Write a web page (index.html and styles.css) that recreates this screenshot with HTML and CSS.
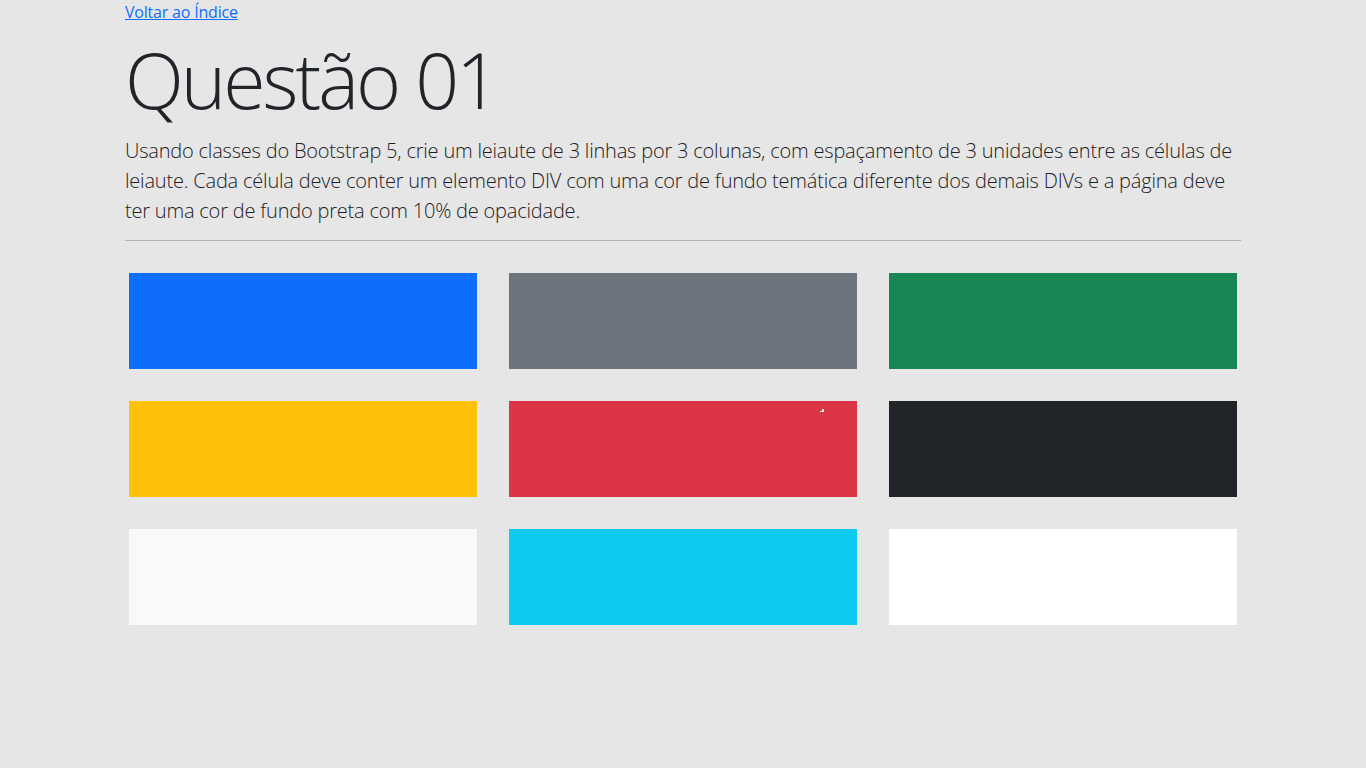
FILE: index.html
```html
<!DOCTYPE html>
<html lang="pt-BR">
<head>
<meta charset="utf-8">
<title>Questão 01</title>
<link rel="stylesheet" href="styles.css">
</head>
<body>
<div class="container">
  <div class="back"><a href="#">Voltar ao Índice</a></div>
  <h1 class="title">Questão 01</h1>
  <p class="lead">Usando classes do Bootstrap 5, crie um leiaute de 3 linhas por 3 colunas, com espaçamento de 3 unidades entre as células de leiaute. Cada célula deve conter um elemento DIV com uma cor de fundo temática diferente dos demais DIVs e a página deve ter uma cor de fundo preta com 10% de opacidade.</p>
  <hr class="rule">
  <div class="grid">
    <div class="cell primary"></div>
    <div class="cell secondary"></div>
    <div class="cell success"></div>
    <div class="cell warning"></div>
    <div class="cell danger"><span class="mark"></span></div>
    <div class="cell dark"></div>
    <div class="cell light"></div>
    <div class="cell info"></div>
    <div class="cell white"></div>
  </div>
</div>
</body>
</html>
```
FILE: styles.css
```css
html, body {
  margin: 0;
  padding: 0;
}
body {
  background: #e6e6e6;
  color: #212529;
  font-family: "Open Sans", "Noto Sans", "DejaVu Sans", sans-serif;
  font-size: 16px;
  line-height: 1.5;
}
.container {
  width: 1116px;
  margin: 0 auto;
}
.back {
  height: 24px;
  line-height: 24px;
}
.back a {
  color: #0d6efd;
  text-decoration: underline;
  font-size: 16px;
  letter-spacing: -0.2px;
}
.title {
  margin: 8px 0 8px;
  font-size: 77px;
  font-weight: 300;
  line-height: 96px;
  letter-spacing: -3px;
}
.lead {
  margin: 0 0 14px;
  font-size: 20px;
  font-weight: 300;
  line-height: 30px;
  letter-spacing: -0.2px;
  color: #1d2125;
}
.rule {
  margin: 0;
  border: 0;
  border-top: 1px solid #b3b3b3;
}
.grid {
  display: grid;
  grid-template-columns: repeat(3, 348px);
  grid-auto-rows: 96px;
  column-gap: 32px;
  row-gap: 32px;
  padding: 32px 4px 0;
}
.cell { position: relative; }
.primary { background: #0d6efd; }
.secondary { background: #6c757d; }
.success { background: #198754; }
.warning { background: #ffc107; }
.danger { background: #dc3545; }
.dark { background: #212529; }
.light { background: #f8f9fa; }
.info { background: #0dcaf0; }
.white { background: #ffffff; }
.mark {
  position: absolute;
  left: 311px;
  top: 8px;
  width: 4px;
  height: 3px;
  border-bottom: 1px solid #fff;
  box-sizing: border-box;
}
.mark::after {
  content: "";
  position: absolute;
  right: 0;
  top: 0;
  width: 2px;
  height: 2px;
  background: #fff;
}
```
